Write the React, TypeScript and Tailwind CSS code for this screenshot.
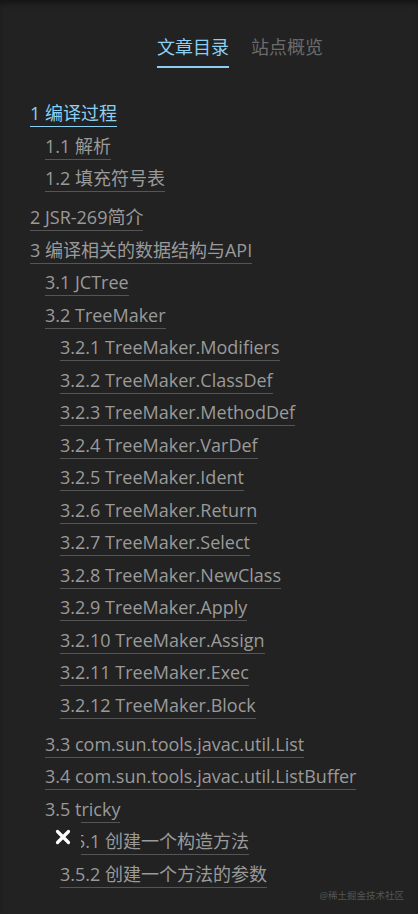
import { X } from 'lucide-react';

type Item = { title: string; children?: Item[] };

const toc: Item[] = [
    {
        title: '1 编译过程',
        children: [{ title: '1.1 解析' }, { title: '1.2 填充符号表' }],
    },
    { title: '2 JSR-269简介' },
    {
        title: '3 编译相关的数据结构与API',
        children: [
            { title: '3.1 JCTree' },
            {
                title: '3.2 TreeMaker',
                children: [
                    { title: '3.2.1 TreeMaker.Modifiers' },
                    { title: '3.2.2 TreeMaker.ClassDef' },
                    { title: '3.2.3 TreeMaker.MethodDef' },
                    { title: '3.2.4 TreeMaker.VarDef' },
                    { title: '3.2.5 TreeMaker.Ident' },
                    { title: '3.2.6 TreeMaker.Return' },
                    { title: '3.2.7 TreeMaker.Select' },
                    { title: '3.2.8 TreeMaker.NewClass' },
                    { title: '3.2.9 TreeMaker.Apply' },
                    { title: '3.2.10 TreeMaker.Assign' },
                    { title: '3.2.11 TreeMaker.Exec' },
                    { title: '3.2.12 TreeMaker.Block' },
                ],
            },
            { title: '3.3 com.sun.tools.javac.util.List' },
            { title: '3.4 com.sun.tools.javac.util.ListBuffer' },
            {
                title: '3.5 tricky',
                children: [{ title: '3.5.1 创建一个构造方法' }, { title: '3.5.2 创建一个方法的参数' }],
            },
        ],
    },
];

function TocList({ items, nested }: { items: Item[]; nested?: boolean }) {
    return (
        <ul className={nested ? 'pl-[15px] pb-[6.5px]' : ''}>
            {items.map((item) => {
                const active = item.title === '1 编译过程';
                return (
                    <li key={item.title}>
                        <a
                            className={`block w-fit h-[26px] leading-[25px] mb-[6.5px] border-b whitespace-nowrap ${active
                                ? 'text-[#8bd0f2] border-[#8bd0f2]'
                                : 'text-[#9a9a9a] border-[#555555]'
                                }`}
                        >
                            {item.title}
                        </a>
                        {item.children && <TocList items={item.children} nested />}
                    </li>
                );
            })}
        </ul>
    );
}

export default function App() {
    return (
        <div
            className="relative w-[418px] h-[914px] overflow-hidden bg-[#222222] shadow-[inset_0_6px_6px_-3px_rgba(0,0,0,0.45)]"
            style={{ fontFamily: '"Open Sans", "Noto Sans CJK SC", sans-serif' }}
        >
            {/* Tabs */}
            <div className="flex gap-[22px] pl-[157px] pt-[35px] text-[18px]">
                <div className="text-[#8bd0f2] leading-[25px] pb-[6px] border-b-2 border-[#8bd0f2]">文章目录</div>
                <div className="text-[#6b6b6b] leading-[25px]">站点概览</div>
            </div>

            {/* TOC */}
            <div className="pl-[30px] pt-[33px] text-[18px]">
                <TocList items={toc} />
            </div>

            {/* Close button */}
            <button className="absolute left-[45px] top-[818px] w-[36px] h-[37px] flex items-center justify-center bg-[#222222] text-white">
                <X size={22} strokeWidth={3.5} />
            </button>

            <div className="absolute right-[14px] bottom-[11px] text-[9.5px] text-[#555555]">@稀土掘金技术社区</div>
        </div>
    );
}
